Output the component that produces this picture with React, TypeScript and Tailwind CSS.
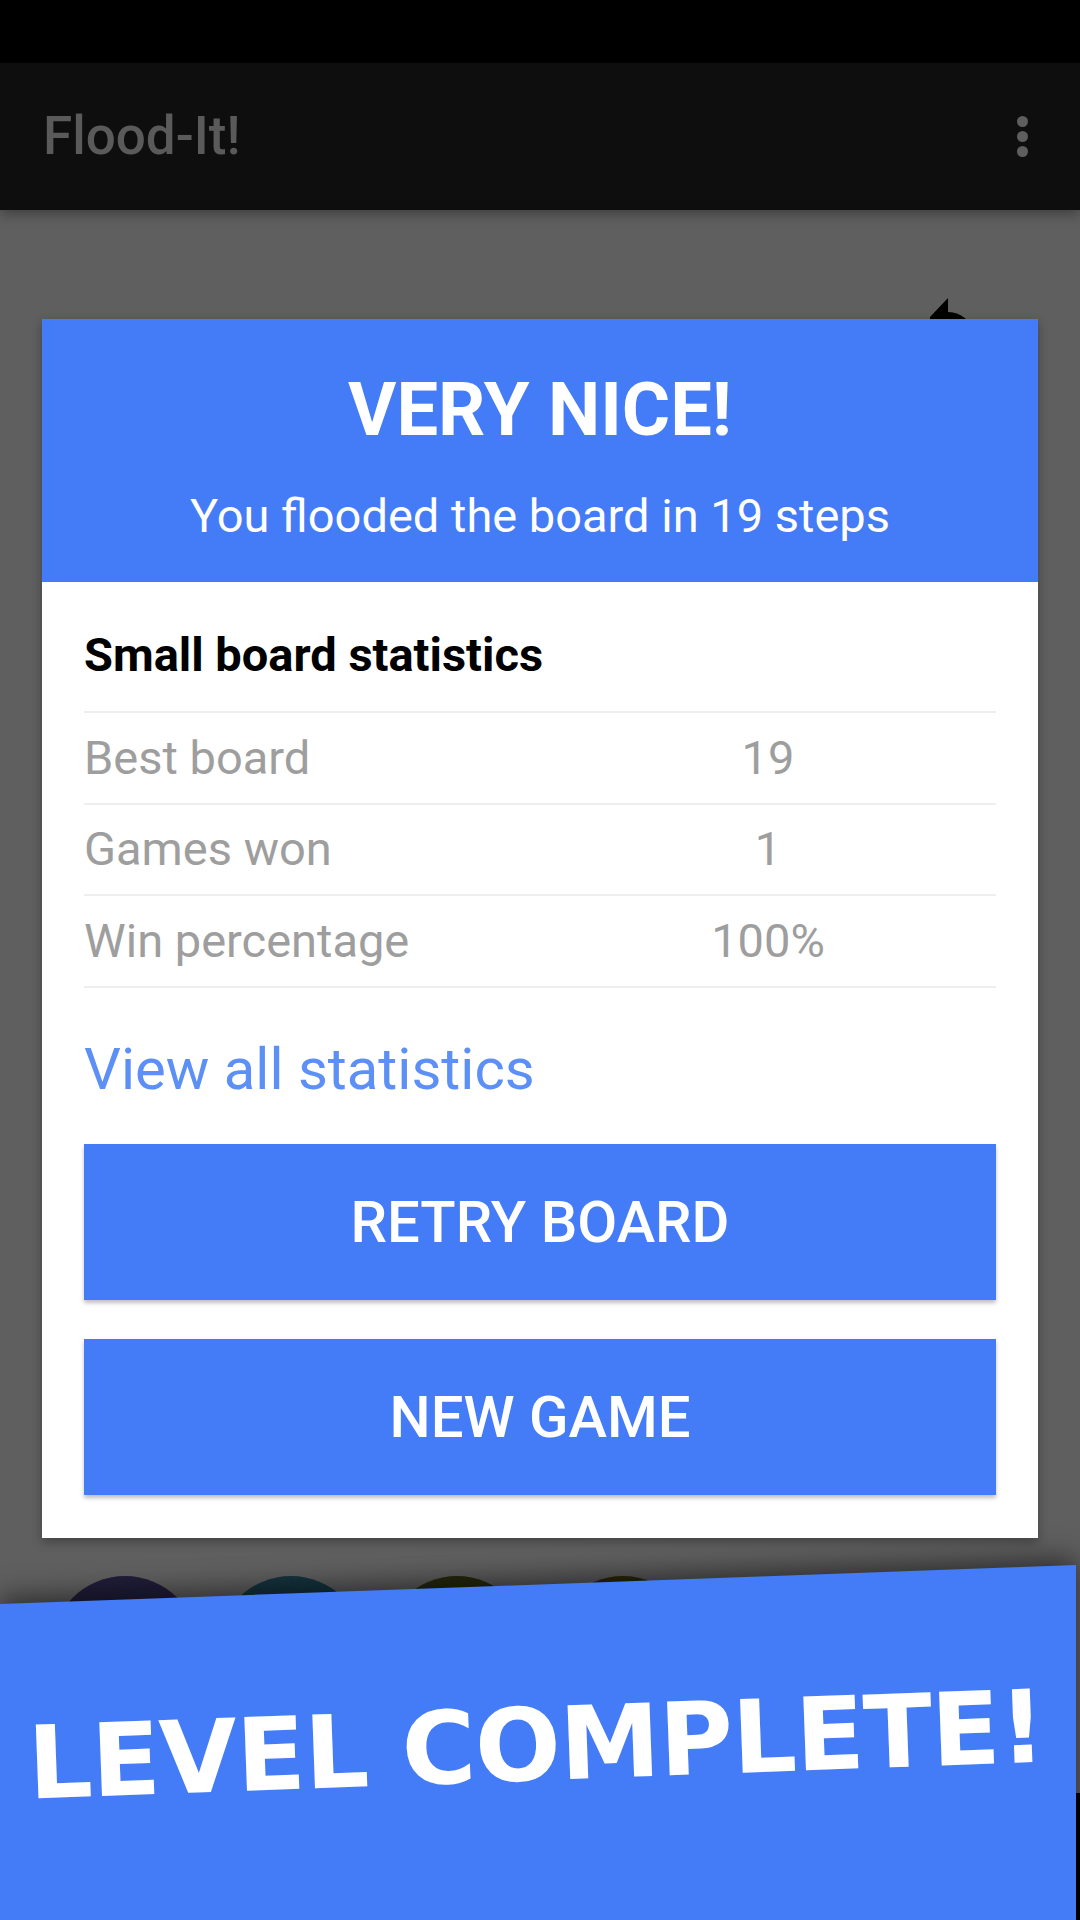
import React from 'react'

const stats = [
  { label: 'Best board', value: '19' },
  { label: 'Games won', value: '1' },
  { label: 'Win percentage', value: '100%' },
]

const circles = ['#201d38', '#15343f', '#272a0c', '#2c2a0a', '#2a1414', '#1a2a14']

export default function App() {
  return (
    <div className="relative w-[1080px] h-[1920px] overflow-hidden bg-[#5f5f5f] font-['Roboto',sans-serif]">
      <div className="h-[63px] bg-black" />
      <div className="relative z-10 h-[147px] bg-[#0e0e0e] flex items-center justify-between pl-[43px] pr-[52px] shadow-[0_4px_12px_rgba(0,0,0,0.35)]">
        <span className="text-[53px] font-medium text-[#5a5a5a] leading-none">Flood-It!</span>
        <div className="flex flex-col gap-[4px]">
          <span className="w-[11px] h-[11px] rounded-full bg-[#5e5e5e]" />
          <span className="w-[11px] h-[11px] rounded-full bg-[#5e5e5e]" />
          <span className="w-[11px] h-[11px] rounded-full bg-[#5e5e5e]" />
        </div>
      </div>

      {/* undo arrow behind the dialog */}
      <svg className="absolute left-[920px] top-[290px]" width="60" height="40" viewBox="0 0 60 40">
        <path d="M10 27 L28 8 L28 22 Q38 22 46 29 L46 40 L10 40 Z" fill="#000" />
      </svg>

      <div className="relative z-10 mt-[109px] mx-[42px] bg-white shadow-[0_4px_10px_rgba(0,0,0,0.3)]">
        <div className="bg-[#447bf6] pt-[47px] pb-[38px] text-center text-white">
          <div className="text-[74px] font-bold leading-[88px]">VERY NICE!</div>
          <div className="mt-[34px] text-[47px] leading-[56px]">You flooded the board in 19 steps</div>
        </div>
        <div className="px-[42px] pt-[45px] pb-[43px]">
          <div className="text-[47px] font-bold leading-[56px] text-black">Small board statistics</div>
          <div className="mt-[28px] border-t-2 border-[#eeeeee]">
            {stats.map(s => (
              <div key={s.label} className="grid grid-cols-2 items-center h-[91.7px] border-b-2 border-[#eeeeee] text-[47px] text-[#9e9e9e]">
                <span>{s.label}</span>
                <span className="text-center">{s.value}</span>
              </div>
            ))}
          </div>
          <div className="mt-[47px] text-[58px] leading-[68px] text-[#5d90f6]">View all statistics</div>
          <button className="mt-[41px] w-full h-[156px] bg-[#447bf6] text-white text-[58px] font-medium shadow-[0_3px_4px_rgba(0,0,0,0.25)]">RETRY BOARD</button>
          <button className="mt-[39px] w-full h-[156px] bg-[#447bf6] text-white text-[58px] font-medium shadow-[0_3px_4px_rgba(0,0,0,0.25)]">NEW GAME</button>
        </div>
      </div>

      <div className="mt-[38px] pl-[51px] flex gap-[18px]">
        {circles.map((c, i) => (
          <div key={i} className="w-[148px] h-[148px] rounded-full shrink-0" style={{ backgroundColor: c }} />
        ))}
      </div>

      <div className="absolute left-0 top-[1540px] w-[1076px] h-[380px] drop-shadow-[0_-6px_14px_rgba(0,0,0,0.55)]">
        <div className="w-full h-full bg-[#447bf6] [clip-path:polygon(0_64px,100%_25px,100%_100%,0_100%)] pt-[155px] flex justify-center">
          <span className="block -rotate-[2.08deg] font-['DejaVu_Sans',sans-serif] font-bold text-[101px] leading-[100px] text-white tracking-[-1px]">LEVEL COMPLETE!</span>
        </div>
      </div>
      <div className="absolute left-[1076px] top-[1793px] w-[4px] h-[127px] bg-black" />
    </div>
  )
}
